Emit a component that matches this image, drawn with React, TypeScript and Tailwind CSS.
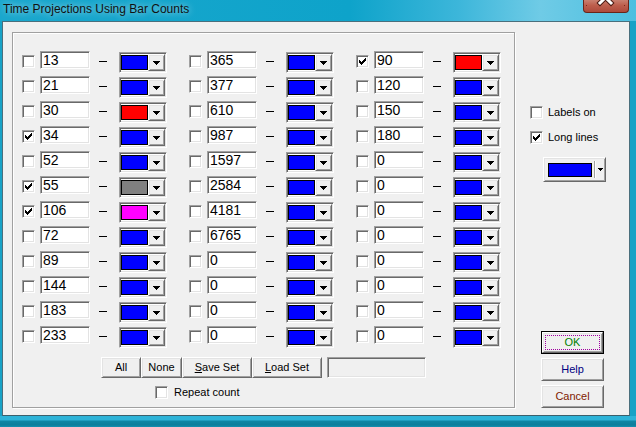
import React from "react";

type Entry = { v: string; c: string; on?: boolean };

const BLUE = "bg-[#0000ff]";
const RED = "bg-[#ff0000]";
const GRAY = "bg-[#808080]";
const MAG = "bg-[#ff00ff]";

const col1: Entry[] = [
  { v: "13", c: BLUE },
  { v: "21", c: BLUE },
  { v: "30", c: RED },
  { v: "34", c: BLUE, on: true },
  { v: "52", c: BLUE },
  { v: "55", c: GRAY, on: true },
  { v: "106", c: MAG, on: true },
  { v: "72", c: BLUE },
  { v: "89", c: BLUE },
  { v: "144", c: BLUE },
  { v: "183", c: BLUE },
  { v: "233", c: BLUE },
];
const col2: Entry[] = ["365", "377", "610", "987", "1597", "2584", "4181", "6765", "0", "0", "0", "0"].map(
  (v) => ({ v, c: BLUE })
);
const col3: Entry[] = [
  { v: "90", c: RED, on: true },
  ...["120", "150", "180", "0", "0", "0", "0", "0", "0", "0", "0"].map((v) => ({ v, c: BLUE })),
];

const SUNKEN =
  "border border-t-[#a0a0a0] border-l-[#a0a0a0] border-b-white border-r-white shadow-[inset_1px_1px_0_#696969,inset_-1px_-1px_0_#e3e3e3]";
const RAISED =
  "border border-t-white border-l-white border-b-[#696969] border-r-[#696969] shadow-[inset_1px_1px_0_#e3e3e3,inset_-1px_-1px_0_#a0a0a0] bg-[#f0f0f0]";

function Check({ on }: { on?: boolean }) {
  return (
    <div className={`w-[13px] h-[13px] shrink-0 bg-white ${SUNKEN} flex items-center justify-center`}>
      {on && (
        <svg width="7" height="7" viewBox="0 0 7 7" shapeRendering="crispEdges">
          <path
            d="M6 0h1v1H6zM5 1h2v1H5zM0 2h1v1H0zM4 2h3v1H4zM0 3h2v1H0zM3 3h3v1H3zM0 4h5v1H0zM1 5h3v1H1zM2 6h1v1H2z"
            fill="#000"
          />
        </svg>
      )}
    </div>
  );
}

function Tri({ small }: { small?: boolean }) {
  return small ? (
    <svg width="5" height="3" viewBox="0 0 5 3" shapeRendering="crispEdges">
      <path d="M0 0h5v1H0zM1 1h3v1H1zM2 2h1v1H2z" fill="#000" />
    </svg>
  ) : (
    <svg width="7" height="4" viewBox="0 0 7 4" shapeRendering="crispEdges">
      <path d="M0 0h7v1H0zM1 1h5v1H1zM2 2h3v1H2zM3 3h1v1H3z" fill="#000" />
    </svg>
  );
}

function ColorCombo({ c }: { c: string }) {
  return (
    <div className={`w-[48px] h-[21px] shrink-0 bg-white ${SUNKEN} p-[1px] flex`}>
      <div className={`w-[27px] my-[1px] border border-black ${c}`} />
      <div className={`ml-auto w-[17px] h-full ${RAISED} flex items-center justify-center`}>
        <Tri />
      </div>
    </div>
  );
}

function Row({ e }: { e: Entry }) {
  return (
    <div className="h-[25px] flex items-start">
      <div className="mt-[4px]">
        <Check on={e.on} />
      </div>
      <div
        className={`ml-[5px] w-[50px] h-[18px] bg-white ${SUNKEN} pl-[2px] text-[14px] leading-[16px] text-black font-['Liberation_Sans_Narrow','Arial_Narrow','Liberation_Sans',sans-serif]`}
      >
        {e.v}
      </div>
      <div className="ml-[9px] mt-[10px] w-[8px] h-px bg-black" />
      <div className="ml-[12px] mt-[1px]">
        <ColorCombo c={e.c} />
      </div>
    </div>
  );
}

function Column({ items, last }: { items: Entry[]; last?: boolean }) {
  return (
    <div className={`flex flex-col ${last ? "" : "w-[167px]"}`}>
      {items.map((e, i) => (
        <Row key={i} e={e} />
      ))}
    </div>
  );
}

export default function App() {
  return (
    <div className="w-[636px] h-[427px] overflow-hidden relative flex flex-col bg-[#18a2c6] font-['Liberation_Sans',Arial,sans-serif] text-black select-none">
      {/* Title bar */}
      <div className="h-[21px] shrink-0 flex items-start bg-[linear-gradient(to_right,#1aa7cd_0%,#0ea3ca_55%,#3cb6da_72%,#6fcbe6_85%,#4cbfe0_100%)]">
        <span className="ml-[3px] mt-[1px] text-[12px] leading-[16px] text-[#111] [text-shadow:0_0_7px_rgba(255,255,255,0.75)]">
          Time Projections Using Bar Counts
        </span>
      </div>
      <div className="absolute top-0 right-[7px] w-[46px] h-[13px] rounded-b-[4px] border border-t-0 border-[#6a2418] bg-[linear-gradient(to_bottom,#c98070_0%,#bd5e4c_45%,#ad4a3c_100%)] overflow-hidden">
        <svg width="46" height="13" viewBox="0 0 46 13" className="absolute left-[-1px] top-0">
          <path d="M17 -8 L28 3 M28 -8 L17 3" stroke="#4a1a12" strokeWidth="5" strokeLinecap="square" />
          <path d="M17 -8 L28 3 M28 -8 L17 3" stroke="#ffffff" strokeWidth="3" strokeLinecap="square" />
          <rect x="3" y="5" width="1" height="1" fill="#7a2a1c" />
          <rect x="41" y="5" width="1" height="1" fill="#7a2a1c" />
        </svg>
      </div>

      {/* Middle */}
      <div className="flex-1 flex pl-[2px] pr-[6px]">
        <div className="flex-1 flex bg-[#f0f0f0] border border-t-[#4a6f7c] border-l-[#4a6f7c] border-r-[#4a6f7c] border-b-[#3b5f6b]">
          {/* Group box */}
          <div className="ml-[9px] mt-[10px] w-[503px] h-[376px] shrink-0 border border-[#a0a0a0] shadow-[inset_1px_1px_0_#ffffff,1px_1px_0_#ffffff] flex flex-col pl-[9px] pt-[18px]">
            <div className="flex">
              <Column items={col1} />
              <Column items={col2} />
              <Column items={col3} last />
            </div>
            <div className="ml-[79px] mt-[6px] flex text-[11px]">
              <button className={`${RAISED} w-[40px] h-[21px] text-[11px] leading-none`}>All</button>
              <button className={`${RAISED} w-[41px] h-[21px] text-[11px] leading-none`}>None</button>
              <button className={`${RAISED} w-[70px] h-[21px] text-[11px] leading-none`}>
                <span className="underline">S</span>ave Set
              </button>
              <button className={`${RAISED} w-[70px] h-[21px] text-[11px] leading-none`}>
                <span className="underline">L</span>oad Set
              </button>
              <div className={`ml-[5px] w-[99px] h-[21px] bg-[#f0f0f0] ${SUNKEN}`} />
            </div>
            <div className="ml-[133px] mt-[8px] flex items-center">
              <Check />
              <span className="ml-[6px] text-[11px] leading-[13px]">Repeat count</span>
            </div>
          </div>

          {/* Right panel */}
          <div className="flex flex-col pl-[15px] pt-[84px] pb-[7px]">
            <div className="flex items-center">
              <Check />
              <span className="ml-[5px] text-[11px] leading-[13px]">Labels on</span>
            </div>
            <div className="mt-[12px] flex items-center">
              <Check on />
              <span className="ml-[5px] text-[11px] leading-[13px]">Long lines</span>
            </div>
            <div className={`ml-[13px] mt-[13px] w-[63px] h-[25px] ${RAISED} flex items-center pl-[4px]`}>
              <div className="w-[44px] h-[14px] border border-black bg-[#0000ff]" />
              <div className="ml-[2px] w-px h-[17px] bg-[#a0a0a0] shadow-[1px_0_0_#ffffff]" />
              <div className="ml-[3px]">
                <Tri small />
              </div>
            </div>
            <div className="mt-auto ml-[11px] flex flex-col gap-[4px]">
              <button className="w-[63px] h-[23px] border border-[#000] bg-[#f0f0f0] p-0">
                <div className={`w-full h-full ${RAISED} flex items-center justify-center p-[2px]`}>
                  <div className="w-full h-full border border-dotted border-[#a000a0] flex items-center justify-center text-[11px] leading-none text-[#008000]">
                    OK
                  </div>
                </div>
              </button>
              <button className={`w-[63px] h-[23px] ${RAISED} text-[11px] leading-none text-[#000080]`}>Help</button>
              <button className={`w-[63px] h-[23px] ${RAISED} text-[11px] leading-none text-[#802000]`}>Cancel</button>
            </div>
          </div>
        </div>
      </div>

      {/* Bottom frame */}
      <div className="h-[11px] shrink-0 bg-[linear-gradient(to_bottom,#2db3d8_0px,#2db3d8_4px,#0f86a4_5px,#0c7e9b_9px,#1590b1_11px)]" />
    </div>
  );
}
